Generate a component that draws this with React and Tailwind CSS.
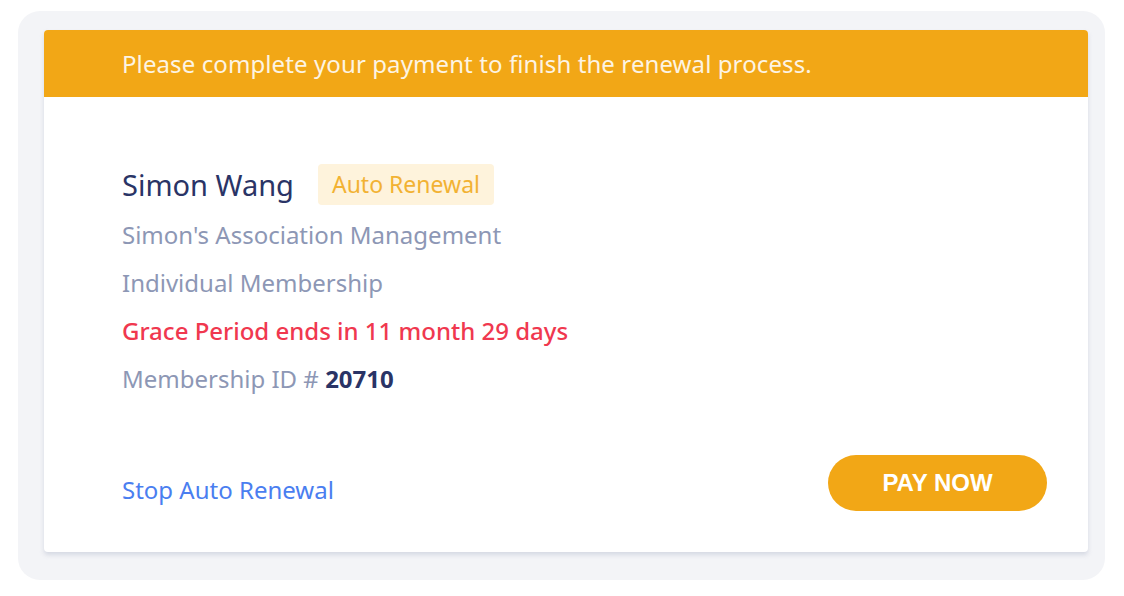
export default function App() {
  return (
    <div className="w-[1124px] h-[596px] bg-white pt-[11px] pl-[18px]" style={{ fontFamily: '"Noto Sans", "Open Sans", sans-serif' }}>
      <div className="w-[1087px] h-[569px] rounded-[22px] bg-[#f3f4f7] pt-[19px] pl-[26px]">
        <div className="w-[1044px] h-[522px] bg-white rounded-[4px] shadow-[0_3px_4px_rgba(180,186,204,0.45)] flex flex-col">
          {/* Banner */}
          <div className="h-[67px] bg-[#f2a716] rounded-t-[4px] flex items-center pl-[78px]">
            <p className="text-[24px] text-[#fdf4e3] tracking-[0.1px]">
              Please complete your payment to finish the renewal process.
            </p>
          </div>

          {/* Details */}
          <div className="pl-[78px] pt-[67px]">
            <div className="flex items-center h-[41px]">
              <span className="text-[29px] text-[#2a3466] leading-none">Simon Wang</span>
              <span className="ml-[24px] h-[41px] px-[14px] flex items-center bg-[#fef3dc] rounded-[4px] text-[23px] text-[#f2b233]">
                Auto Renewal
              </span>
            </div>
            <div className="mt-[6px] flex flex-col text-[24px] text-[#8d97b5]">
              <p className="h-12 leading-[48px]">Simon&#39;s Association Management</p>
              <p className="h-12 leading-[48px]">Individual Membership</p>
              <p className="h-12 leading-[48px] text-[#f0384f] font-medium">Grace Period ends in 11 month 29 days</p>
              <p className="h-12 leading-[48px]">
                Membership ID # <span className="font-bold text-[#2a3466]">20710</span>
              </p>
            </div>
          </div>

          {/* Footer */}
          <div className="mt-auto mb-[41px] pl-[78px] pr-[41px] flex items-center justify-between">
            <a className="pt-[14px] text-[24px] text-[#4a7ef0] cursor-pointer">Stop Auto Renewal</a>
            <button
              className="w-[219px] h-[56px] rounded-full bg-[#f2a716] text-white text-[24px] font-bold"
              style={{ fontFamily: '"Liberation Sans", Arial, sans-serif' }}
            >
              PAY NOW
            </button>
          </div>
        </div>
      </div>
    </div>
  );
}
